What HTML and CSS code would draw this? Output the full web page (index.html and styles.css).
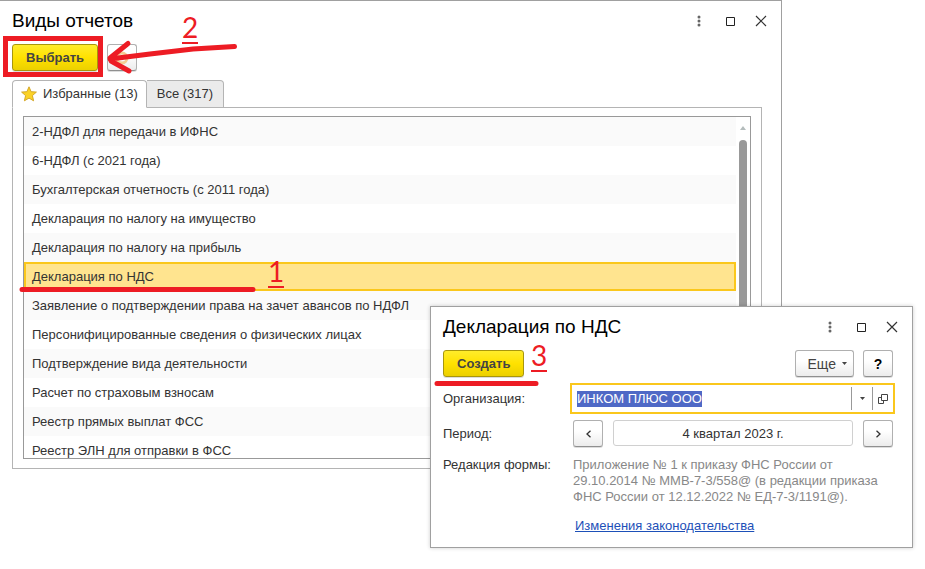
FILE: index.html
```html
<!DOCTYPE html>
<html lang="ru">
<head>
    <meta charset="UTF-8">
    <meta name="viewport" content="width=device-width, initial-scale=1.0">
    <title>Виды отчетов</title>
    <link rel="stylesheet" href="styles.css">
</head>
<body>

    <main class="window">
        <header class="titlebar">
            <h1>Виды отчетов</h1>
            <div class="window-buttons">
                <button type="button" aria-label="Меню"><svg width="12" height="12" viewBox="0 0 12 12"><g fill="#666"><circle cx="6" cy="2" r="1.500"/><circle cx="6" cy="6" r="1.500"/><circle cx="6" cy="10" r="1.500"/></g></svg></button>
                <button type="button" aria-label="Развернуть"><svg width="12" height="12" viewBox="0 0 12 12"><path d="M2.500 2.500h8v8h-8z" fill="none" stroke="#222"/></svg></button>
                <button type="button" aria-label="Закрыть"><svg width="12" height="12" viewBox="0 0 12 12"><path d="M1 1l10 10M11 1L1 11" fill="none" stroke="#333" stroke-width="1.200"/></svg></button>
            </div>
        </header>

        <div class="toolbar">
            <button type="button" class="btn btn-primary">Выбрать</button>
            <button type="button" class="btn btn-small" aria-label="Обновить"><svg width="16" height="16" viewBox="0 0 16 16"><circle cx="8" cy="8" r="5" fill="none" stroke="#f3cf94" stroke-width="3"/></svg></button>
        </div>

        <div class="tabs" role="tablist">
            <button type="button" class="tab active" role="tab" aria-selected="true">
                <svg width="16" height="16" viewBox="0 0 16 16"><path d="M8 .8l2.100 4.900 5.300.4-4 3.500 1.200 5.200L8 12.100l-4.600 2.700 1.200-5.200-4-3.500 5.300-.4z" fill="#fbd226" stroke="#d4a728"/></svg>
                Избранные (13)
            </button>
            <button type="button" class="tab" role="tab" aria-selected="false">Все (317)</button>
        </div>

        <div class="panel">
            <div class="list-box">
                <ul class="list" role="listbox" aria-label="Виды отчетов">
                    <li role="option">2-НДФЛ для передачи в ИФНС</li>
                    <li role="option">6-НДФЛ (с 2021 года)</li>
                    <li role="option">Бухгалтерская отчетность (с 2011 года)</li>
                    <li role="option">Декларация по налогу на имущество</li>
                    <li role="option">Декларация по налогу на прибыль</li>
                    <li role="option" class="selected" aria-selected="true">Декларация по НДС</li>
                    <li role="option">Заявление о подтверждении права на зачет авансов по НДФЛ</li>
                    <li role="option">Персонифицированные сведения о физических лицах</li>
                    <li role="option">Подтверждение вида деятельности</li>
                    <li role="option">Расчет по страховым взносам</li>
                    <li role="option">Реестр прямых выплат ФСС</li>
                    <li role="option">Реестр ЭЛН для отправки в ФСС</li>
                </ul>
                <div class="scrollbar">
                    <svg width="6" height="4" viewBox="0 0 6 4"><path d="M3 0l3 4H0z" fill="#b4bcbc"/></svg>
                    <div class="thumb"></div>
                </div>
            </div>
        </div>
    </main>

    <section class="dialog" role="dialog" aria-labelledby="dialogTitle">
        <header class="titlebar">
            <h2 id="dialogTitle">Декларация по НДС</h2>
            <div class="window-buttons">
                <button type="button" aria-label="Меню"><svg width="12" height="12" viewBox="0 0 12 12"><g fill="#666"><circle cx="6" cy="2" r="1.500"/><circle cx="6" cy="6" r="1.500"/><circle cx="6" cy="10" r="1.500"/></g></svg></button>
                <button type="button" aria-label="Развернуть"><svg width="12" height="12" viewBox="0 0 12 12"><path d="M2.500 2.500h8v8h-8z" fill="none" stroke="#222"/></svg></button>
                <button type="button" aria-label="Закрыть"><svg width="12" height="12" viewBox="0 0 12 12"><path d="M1 1l10 10M11 1L1 11" fill="none" stroke="#333" stroke-width="1.200"/></svg></button>
            </div>
        </header>

        <div class="toolbar">
            <button type="button" class="btn btn-primary">Создать</button>
            <span class="spacer"></span>
            <button type="button" class="btn">Еще <svg width="5" height="3" viewBox="0 0 5 3"><path d="M0 0h5L2.500 3z" fill="#444"/></svg></button>
            <button type="button" class="btn btn-small help">?</button>
        </div>

        <form class="form">
            <label for="org">Организация:</label>
            <div class="combo">
                <input id="org" type="text" value="ИНКОМ ПЛЮС ООО" autocomplete="off" spellcheck="false">
                <button type="button" aria-label="Выбрать из списка"><svg width="5" height="3" viewBox="0 0 5 3"><path d="M0 0h5L2.500 3z" fill="#444"/></svg></button>
                <button type="button" aria-label="Открыть"><svg width="10" height="10" viewBox="0 0 10 10"><path d="M3.500 .5h6v6h-6zM3 3.500H.5v6h5V7" fill="none" stroke="#444"/></svg></button>
            </div>

            <label for="period">Период:</label>
            <div class="period">
                <button type="button" class="btn btn-small" aria-label="Предыдущий период"><svg width="5" height="8" viewBox="0 0 5 8"><path d="M4.500 .8L1 4l3.500 3.200" fill="none" stroke="#333" stroke-width="1.300"/></svg></button>
                <input id="period" type="text" value="4 квартал 2023 г." readonly>
                <button type="button" class="btn btn-small" aria-label="Следующий период"><svg width="5" height="8" viewBox="0 0 5 8"><path d="M.5 .8L4 4 .5 7.200" fill="none" stroke="#333" stroke-width="1.300"/></svg></button>
            </div>

            <span class="form-label">Редакция формы:</span>
            <div class="edition">
                <p>Приложение № 1 к приказу ФНС России от<br>29.10.2014 № ММВ-7-3/558@ (в редакции приказа<br>ФНС России от 12.12.2022 № ЕД-7-3/1191@).</p>
                <a href="#">Изменения законодательства</a>
            </div>
        </form>
    </section>

    <!-- Step marks drawn over both windows -->
    <svg class="marks" width="925" height="569" viewBox="0 0 925 569">
        <g fill="none" stroke="#ed1c24" stroke-width="5">
            <path d="M5.500 38.500h95v36h-95z"/>
            <g stroke-linecap="round" stroke-linejoin="round">
                <path d="M22 289.500h231M437 383.500h99"/>
                <path d="M234.500 46.500L193 49l-43 5-40 5M128 43.500L110 58l1 3 18 10"/>
            </g>
        </g>
    </svg>
    <span class="step step-1">1</span>
    <span class="step step-2">2</span>
    <span class="step step-3">3</span>

    <script>
        // Open with the organization name selected
        const org = document.getElementById("org");
        org.focus();
        org.select();
    </script>

</body>
</html>
```
FILE: styles.css
```css
* {
    box-sizing: border-box;
}
body {
    margin: 0;
    min-height: 100vh;
    position: relative;
    background: #fff;
    color: #333;
    font-family: "Liberation Sans", Arial, sans-serif;
    font-size: 13px;
    line-height: 16px;
}
button, input {
    font: inherit;
    color: inherit;
}
h1, h2 {
    margin: 0;
    font-size: 19px;
    line-height: 24px;
    font-weight: normal;
    color: #000;
}

/* Windows */
.window {
    margin-right: 143px;
    padding: 8px 19px 12px 12px;
    border-top: 1px solid #a0a0a0;
    border-right: 1px solid #a0a0a0;
}
.dialog {
    position: absolute;
    top: 306px;
    left: 430px;
    right: 12px;
    padding: 8px 17px 13px 12px;
    background: #fff;
    border: 1px solid #a0a0a0;
    box-shadow: 0 0 4px rgba(0, 0, 0, 0.2);
}
.titlebar {
    display: flex;
    justify-content: space-between;
    align-items: center;
}
.window-buttons {
    display: flex;
    gap: 15px;
    margin-right: -7px;
}
.dialog .window-buttons {
    margin-right: -5px;
}
.window-buttons button {
    display: flex;
    align-items: center;
    justify-content: center;
    width: 16px;
    height: 24px;
    padding: 0;
    border: 0;
    background: none;
}
.toolbar {
    display: flex;
    gap: 9px;
    margin-top: 11px;
}
.spacer {
    flex: 1;
}

/* Buttons */
.btn {
    display: flex;
    align-items: center;
    justify-content: center;
    gap: 6px;
    height: 27px;
    padding: 0 6px 0 12px;
    border: 1px solid #b0b0b0;
    border-bottom-color: #909090;
    border-radius: 3px;
    background: linear-gradient(#fff 40%, #ececec);
    box-shadow: 0 1px 0 #ddd;
    color: #444;
    font-size: 14px;
}
.btn-small {
    width: 30px;
    padding: 0;
}
.btn-primary {
    padding: 0 13px;
    border-color: #a8960c;
    background: linear-gradient(#ffec2b, #ffe100 50%, #ecd000);
    font-size: 13px;
    font-weight: bold;
}
.help {
    margin-right: 2px;
    color: #000;
    font-weight: bold;
}

/* Tabs */
.tabs {
    display: flex;
    margin-top: 9px;
}
.tab {
    display: flex;
    align-items: center;
    gap: 6px;
    height: 28px;
    padding: 0 10px;
    border: 1px solid #b4b4b4;
    border-left: 0;
    border-radius: 0 4px 0 0;
    background: #ebebeb;
}
.tab.active {
    padding: 0 8px;
    border-left: 1px solid #b4b4b4;
    border-bottom-color: #fff;
    border-radius: 4px 4px 0 0;
    background: #fff;
    position: relative;
}
.panel {
    margin-top: -1px;
    padding: 8px 10px 9px;
    border: 1px solid #b4b4b4;
}

/* Report list */
.list-box {
    display: flex;
    height: 343px;
    border: 1px solid #999;
    overflow: hidden;
}
.list {
    flex: 1;
    margin: 0;
    padding: 0;
    list-style: none;
}
.list li {
    height: 29px;
    padding: 0 8px;
    line-height: 29px;
}
.list li:nth-child(odd) {
    background: #fafafa;
}
.list li.selected {
    padding: 0 6px;
    border: 2px solid #fac71c;
    background: #ffe48f;
    line-height: 25px;
}
.scrollbar {
    display: flex;
    flex-direction: column;
    align-items: center;
    gap: 10px;
    width: 14px;
    padding: 9px 0 20px;
}
.scrollbar svg {
    flex: none;
}
.thumb {
    flex: 1;
    width: 8px;
    border-radius: 4px;
    background: #999;
}

/* Form */
.form {
    display: grid;
    grid-template-columns: 130px 1fr;
    row-gap: 6px;
    margin-top: 6px;
}
.form label {
    align-self: center;
}
.combo {
    display: flex;
    align-items: center;
    height: 31px;
    margin-left: -3px;
    border: 2px solid #fac71c;
}
.combo input {
    flex: 1;
    min-width: 0;
    padding: 0 5px;
    border: 0;
    outline: 0;
}
.combo input::selection {
    background: #4f69c6;
    color: #fff;
}
.combo button {
    display: flex;
    align-items: center;
    justify-content: center;
    width: 21px;
    height: 23px;
    padding: 0;
    border: 0;
    border-left: 1px solid #999;
    background: none;
}
.period {
    display: flex;
    gap: 10px;
    padding-right: 2px;
}
.period input {
    flex: 1;
    min-width: 0;
    height: 26px;
    border: 1px solid #d0d0d0;
    border-radius: 3px;
    text-align: center;
    outline: 0;
}
.form-label,
.edition {
    padding-top: 4px;
}
.edition p {
    margin: 0 0 13px;
    color: #888;
}
.edition a {
    margin-left: 2px;
    color: #1d50b8;
}

/* Step marks */
.marks {
    position: absolute;
    top: 0;
    left: 0;
    pointer-events: none;
}
.step {
    position: absolute;
    border-bottom: 2px solid #ed1c24;
    color: #ed1c24;
    font-family: Lato, sans-serif;
    font-size: 28px;
    line-height: 30px;
}
.step-1 {
    top: 256px;
    left: 268px;
}
.step-2 {
    top: 12px;
    left: 182px;
}
.step-3 {
    top: 340px;
    left: 531px;
}
```
